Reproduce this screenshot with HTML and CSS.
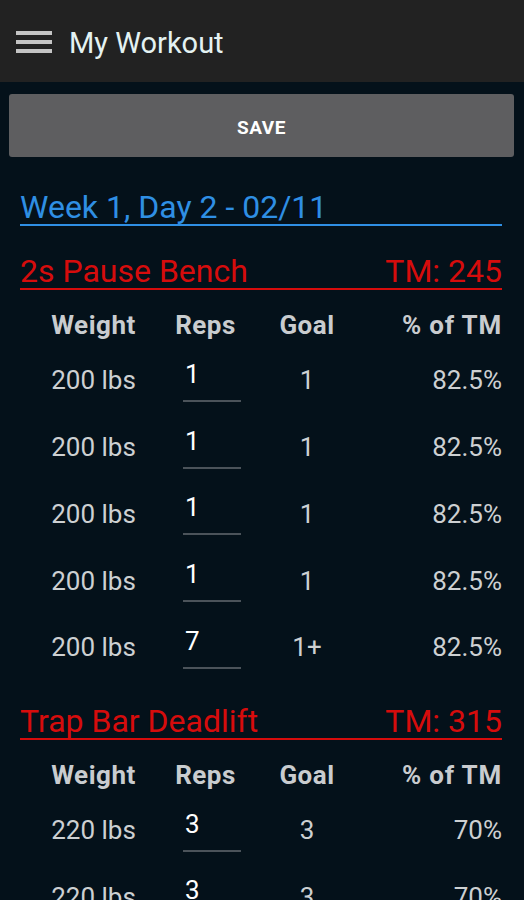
FILE: index.html
```html
<!DOCTYPE html>
<html>
<head>
<meta charset="utf-8">
<meta name="viewport" content="width=device-width, initial-scale=1.0">
<title>My Workout</title>
<link rel="stylesheet" href="styles.css">
</head>
<body>

<header class="app-bar">
	<svg class="menu-icon" width="36" height="24" viewBox="0 0 36 24">
		<rect x="0" y="0" width="36" height="4" fill="#c4c4c4"/>
		<rect x="0" y="9" width="36" height="4" fill="#c4c4c4"/>
		<rect x="0" y="18" width="36" height="4" fill="#c4c4c4"/>
	</svg>
	<h1 class="app-title">My Workout</h1>
</header>

<main class="page">
	<button class="save-btn" type="button">SAVE</button>

	<div class="content">
		<h2 class="week">Week 1, Day 2 - 02/11</h2>

		<!-- 2s Pause Bench -->
		<section class="exercise">
			<div class="exercise-title">
				<span>2s Pause Bench</span>
				<span>TM: 245</span>
			</div>
			<div class="sets">
				<div class="head">Weight</div><div class="head">Reps</div><div class="head">Goal</div><div class="head pct">% of TM</div>

				<div class="cell">200 lbs</div><div class="cell reps"><input type="text" value="1"></div><div class="cell">1</div><div class="cell pct">82.5%</div>
				<div class="cell">200 lbs</div><div class="cell reps"><input type="text" value="1"></div><div class="cell">1</div><div class="cell pct">82.5%</div>
				<div class="cell">200 lbs</div><div class="cell reps"><input type="text" value="1"></div><div class="cell">1</div><div class="cell pct">82.5%</div>
				<div class="cell">200 lbs</div><div class="cell reps"><input type="text" value="1"></div><div class="cell">1</div><div class="cell pct">82.5%</div>
				<div class="cell">200 lbs</div><div class="cell reps"><input type="text" value="7"></div><div class="cell">1+</div><div class="cell pct">82.5%</div>
			</div>
		</section>

		<!-- Trap Bar Deadlift -->
		<section class="exercise">
			<div class="exercise-title">
				<span>Trap Bar Deadlift</span>
				<span>TM: 315</span>
			</div>
			<div class="sets">
				<div class="head">Weight</div><div class="head">Reps</div><div class="head">Goal</div><div class="head pct">% of TM</div>

				<div class="cell">220 lbs</div><div class="cell reps"><input type="text" value="3"></div><div class="cell">3</div><div class="cell pct">70%</div>
				<div class="cell">220 lbs</div><div class="cell reps"><input type="text" value="3"></div><div class="cell">3</div><div class="cell pct">70%</div>
				<div class="cell">220 lbs</div><div class="cell reps"><input type="text" value="3"></div><div class="cell">3</div><div class="cell pct">70%</div>
			</div>
		</section>
	</div>
</main>

</body>
</html>
```

FILE: styles.css
```css
* {
	margin: 0;
	padding: 0;
	box-sizing: border-box;
}
html, body {
	background: #04111a;
}
body {
	font-family: Roboto, "Liberation Sans", sans-serif;
	overflow: hidden;
	height: 900px;
}

/* app bar */
.app-bar {
	height: 82px;
	background: #222222;
	display: flex;
	align-items: center;
	padding-left: 16px;
	gap: 17px;
}
.menu-icon {
	display: block;
	margin-top: 4px;
}
.app-title {
	font-size: 29px;
	font-weight: 400;
	color: #e4f2f2;
	line-height: 32px;
	margin-top: 4px;
}

.page {
	padding: 12px 10px 0 9px;
}
.save-btn {
	display: block;
	width: 100%;
	height: 63px;
	padding-top: 3px;
	border: none;
	border-radius: 3px;
	background: #5e5e60;
	color: #fff;
	font-family: Roboto, "Liberation Sans", sans-serif;
	font-size: 19px;
	font-weight: 700;
	letter-spacing: 0.6px;
}

.content {
	padding: 0 12px 0 11px;
}
.week {
	margin-top: 33px;
	margin-bottom: 7px;
	font-size: 32px;
	font-weight: 400;
	line-height: 34px;
	color: #2f8fe4;
	border-bottom: 2px solid #2f8fe4;
}

.exercise {
	padding-top: 21px;
}
.exercise + .exercise {
	padding-top: 23px;
}
.exercise-title {
	display: flex;
	justify-content: space-between;
	font-size: 32px;
	line-height: 34px;
	color: #d60c0c;
	border-bottom: 2px solid #d60c0c;
}

/* sets table */
.sets {
	display: grid;
	grid-template-columns: 147px 77px 126px 1fr;
	grid-template-rows: 49px;
	grid-auto-rows: 66.75px;
	margin-top: 8px;
	font-size: 26px;
	color: #cdd0d2;
}
.head {
	font-weight: 700;
	text-align: center;
	line-height: 30px;
	padding-top: 12px;
	letter-spacing: 0.5px;
	color: #c9cccf;
}
.cell {
	display: flex;
	align-items: center;
	justify-content: center;
	line-height: 30px;
}
.pct {
	text-align: right;
	justify-content: flex-end;
}
.head.pct {
	letter-spacing: 0.8px;
}
.reps {
	justify-content: flex-start;
}
.reps input {
	width: 58px;
	height: 40px;
	margin: 3px 0 0 16px;
	padding: 0 0 14px 2px;
	background: transparent;
	border: none;
	border-bottom: 2px solid #4b535a;
	color: #ffffff;
	font-family: Roboto, "Liberation Sans", sans-serif;
	font-size: 26px;
	line-height: 24px;
	outline: none;
}
```
